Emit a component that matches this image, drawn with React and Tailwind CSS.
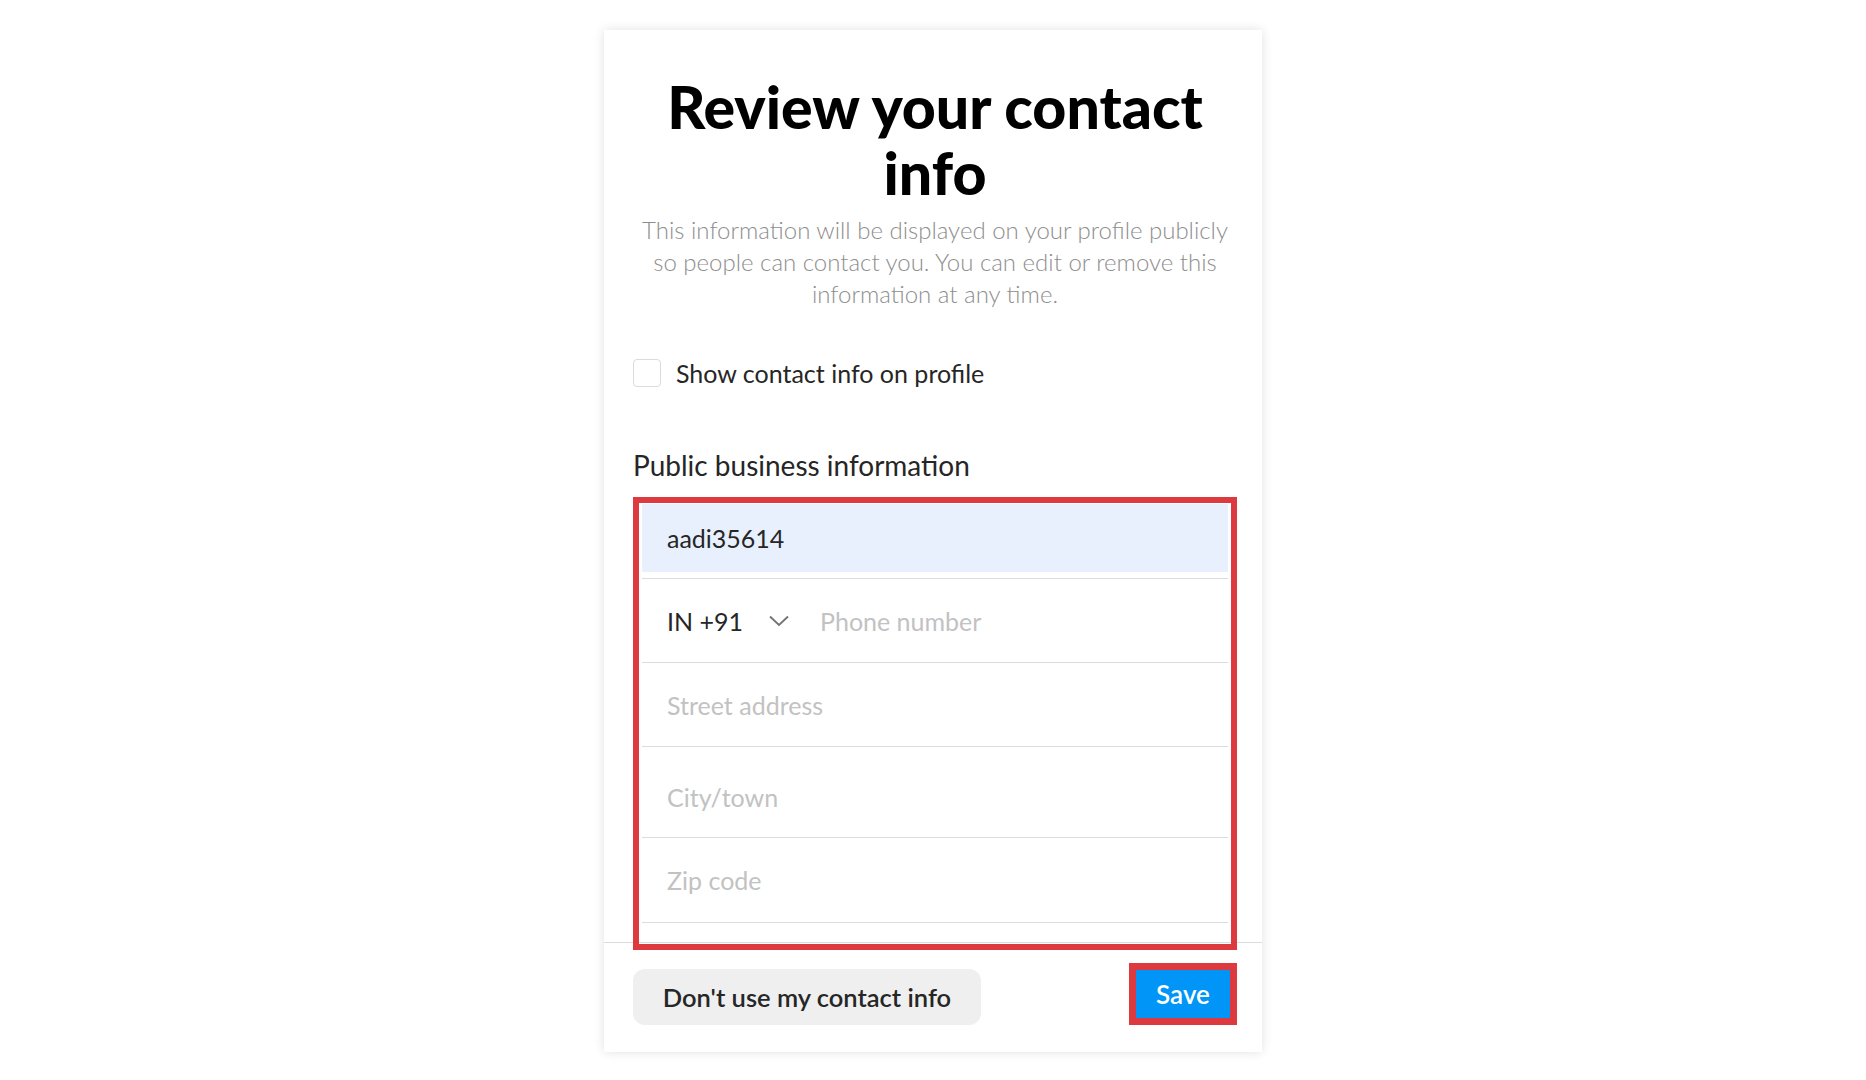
import { useState } from "react";

const font = { fontFamily: 'Lato, "Noto Sans", Arial, sans-serif' };

function Field({ placeholder, className = "" }) {
  return (
    <div className={`flex items-center border-b border-[#dbdbdb] px-[25px] ${className}`}>
      <span className="text-[25px] leading-[32px] text-[#c2c2c2]">{placeholder}</span>
    </div>
  );
}

export default function App() {
  const [shown, setShown] = useState(false);

  return (
    <div className="min-h-[1080px] bg-white pl-[604px] pt-[30px]" style={font}>
      <div className="flex h-[1022px] w-[658px] flex-col bg-white shadow-[0_0_10px_rgba(0,0,0,0.12)]">
        <div className="flex-1 pl-[29px] pr-[25px] pt-[44px]">
          <h1 className="whitespace-nowrap text-center text-[59px] font-black leading-[66px] text-black">
            Review your contact
            <br />
            info
          </h1>
          <p className="mt-[8px] whitespace-nowrap text-center text-[24px] font-light leading-[32px] text-[#8e8e8e]">
            This information will be displayed on your profile publicly
            <br />
            so people can contact you. You can edit or remove this
            <br />
            information at any time.
          </p>

          <label className="mt-[47px] flex items-center gap-[15px]">
            <button
              onClick={() => setShown(!shown)}
              className="h-[28px] w-[28px] rounded-[4px] border border-[#dbdbdb] bg-white"
            />
            <span className="text-[25px] leading-[32px] text-[#262626]">Show contact info on profile</span>
          </label>

          <div className="mt-[60px] text-[28px] leading-[32px] text-[#262626]">Public business information</div>

          <div className="relative z-10 -mb-[8px] mt-[16px] border-[6px] border-[#dc3a3e] px-[3px] pt-px">
            <div className="border-b border-[#dbdbdb] pb-[6px]">
              <div className="flex h-[68px] items-center bg-[#e8f0fe] px-[25px]">
                <span className="text-[25px] leading-[32px] text-[#262626]">aadi35614</span>
              </div>
            </div>
            <div className="flex h-[84px] items-center border-b border-[#dbdbdb] px-[25px]">
              <span className="text-[25px] leading-[32px] text-[#262626]">IN +91</span>
              <svg className="ml-[26px] h-[12px] w-[20px]" viewBox="0 0 20 12" fill="none">
                <polyline points="1,1.5 10,10 19,1.5" stroke="#737373" strokeWidth="1.8" />
              </svg>
              <span className="ml-[31px] text-[25px] leading-[32px] text-[#c2c2c2]">Phone number</span>
            </div>
            <Field placeholder="Street address" className="h-[84px]" />
            <Field placeholder="City/town" className="h-[91px] pt-[10px]" />
            <Field placeholder="Zip code" className="h-[85px]" />
            <div className="h-[21px]" />
          </div>
        </div>

        <div className="flex items-start justify-between border-t border-[#dbdbdb] pb-[27px] pl-[29px] pr-[25px] pt-[20px]">
          <button className="mt-[6px] h-[56px] w-[348px] rounded-[12px] bg-[#efefef] text-[25.5px] font-semibold text-[#262626]">
            Don't use my contact info
          </button>
          <div className="border-[7px] border-[#dc3a3e]">
            <button className="h-[48px] w-[94px] bg-[#0095f6] text-[26px] font-semibold text-white">Save</button>
          </div>
        </div>
      </div>
    </div>
  );
}
